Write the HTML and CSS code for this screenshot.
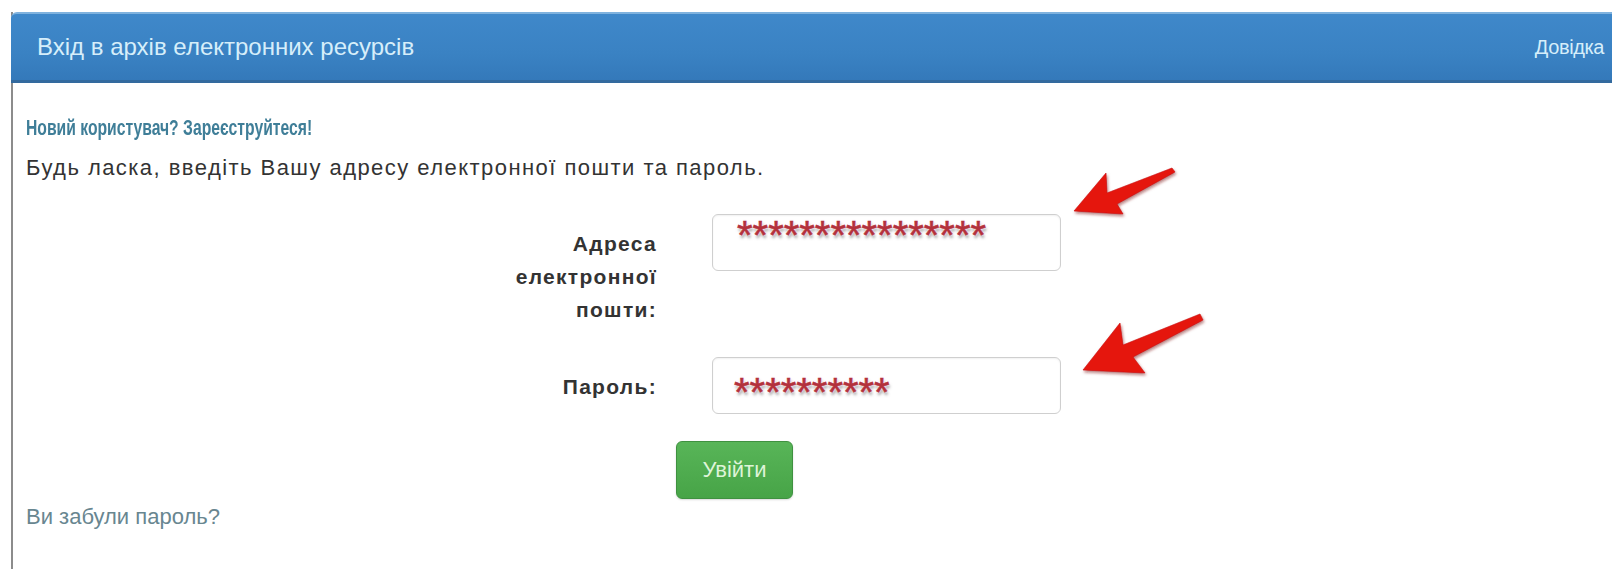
FILE: index.html
```html
<!DOCTYPE html>
<html lang="uk">
<head>
<meta charset="utf-8">
<title>Вхід в архів електронних ресурсів</title>
<link rel="stylesheet" href="styles.css">
</head>
<body>
<div class="panel">
  <div class="panel-heading">
    <span class="panel-title">Вхід в архів електронних ресурсів</span>
    <a class="help-link" href="#">Довідка</a>
  </div>
  <div class="panel-body">
    <div class="register-line"><a class="register-link" href="#">Новий користувач? Зареєструйтеся!</a></div>
    <p class="intro">Будь ласка, введіть Вашу адресу електронної пошти та пароль.</p>
    <form class="login-form">
      <div class="form-row">
        <label class="form-label">Адреса електронної пошти:</label>
        <div class="field field-email"><span class="mask">****************</span></div>
      </div>
      <div class="form-row">
        <label class="form-label">Пароль:</label>
        <div class="field field-password"><span class="mask">**********</span></div>
      </div>
      <div class="form-actions">
        <button type="button" class="btn-submit">Увійти</button>
      </div>
    </form>
    <a class="forgot-link" href="#">Ви забули пароль?</a>
  </div>
</div>

<svg class="callouts" width="1612" height="569" viewBox="0 0 1612 569" xmlns="http://www.w3.org/2000/svg">
  <defs>
    <filter id="arrow-shadow" x="-20%" y="-20%" width="140%" height="160%">
      <feDropShadow dx="1" dy="2" stdDeviation="1.4" flood-color="#7a1010" flood-opacity="0.55"/>
    </filter>
  </defs>
  <g class="arrow" filter="url(#arrow-shadow)">
    <polygon points="1074,211 1106,173 1107,193 1172,168 1175,172 1117,204 1123,214"/>
    <polygon points="1083,370 1120,323 1123,345 1200,314 1203,320 1133,357 1145,373"/>
  </g>
</svg>
</body>
</html>
```

FILE: styles.css
```css
* {
  box-sizing: border-box;
}

html, body {
  margin: 0;
  background: #fff;
  overflow: hidden;
}

body {
  font-family: "Liberation Sans", Arial, sans-serif;
  font-size: 21px;
  line-height: 30px;
  color: #333;
}

a {
  text-decoration: none;
}

/* panel frame: runs past the right and bottom edges of the window */
.panel {
  height: 600px;
  margin: 12px -30px 0 11px;
  border-left: 2px solid #8c8c8c;
  border-right: 2px solid #8c8c8c;
}

.panel-heading {
  height: 71px;
  margin-left: -2px;
  padding: 0 36px 0 26px;
  display: flex;
  align-items: center;
  justify-content: space-between;
  background: linear-gradient(#3f88ca, #3a82c3 60%, #3479ba);
  border-top: 2px solid #7fb2de;
  border-bottom: 3px solid #336a9e;
  border-radius: 6px 6px 0 0;
}

.panel-title {
  font-size: 24px;
  color: #d6eefa;
}

.help-link {
  font-size: 20px;
  letter-spacing: -0.4px;
  color: #d6eefa;
}

.panel-body {
  padding: 30px 13px 0 13px;
}

.register-line {
  height: 30px;
}

/* condensed bold link */
.register-link {
  display: inline-block;
  font-size: 21.5px;
  font-weight: bold;
  white-space: nowrap;
  color: #3f7e98;
  transform: scaleX(0.73);
  transform-origin: left center;
}

.intro {
  margin: 10px 0 0;
  font-size: 22px;
  letter-spacing: 1.45px;
}

/* horizontal form: labels right-aligned, fields in the second column */
.login-form {
  margin: 31px 0 0 471px;
}

.form-row {
  display: grid;
  grid-template-columns: 160px 349px;
  column-gap: 55px;
  align-items: start;
  margin-bottom: 31px;
}

.form-row:nth-child(2) {
  margin-bottom: 27px;
}

.form-label {
  padding-top: 13px;
  font-weight: bold;
  line-height: 33px;
  letter-spacing: 1.3px;
  text-align: right;
}

.field {
  height: 57px;
  border: 1px solid #cfcfcf;
  border-radius: 6px;
  box-shadow: inset 0 1px 2px rgba(0, 0, 0, 0.06);
  overflow: hidden;
}

.field-email {
  padding: 0 0 0 24px;
}

.field-password {
  padding: 14px 0 0 21px;
}

.mask {
  display: block;
  font-size: 40px;
  line-height: 40px;
  color: #b3313c;
  -webkit-text-stroke: 0.6px #b3313c;
  text-shadow: 0 0 1px #fff, 0 0 2px #fff, 0 0 3px #fde, 1px 3px 3px rgba(70, 70, 70, 0.55);
}

.form-actions {
  padding-left: 179px;
}

.btn-submit {
  width: 117px;
  height: 58px;
  padding: 0;
  font-family: "Liberation Sans", Arial, sans-serif;
  font-size: 22px;
  color: #def4d8;
  background: linear-gradient(#58b558, #47a447);
  border: 1px solid #3f9140;
  border-radius: 6px;
  box-shadow: 0 1px 2px rgba(0, 0, 0, 0.15);
}

.forgot-link {
  display: block;
  margin-top: 3px;
  font-size: 22px;
  color: #688690;
}

/* annotation arrows drawn over the form */
.callouts {
  position: absolute;
  top: 0;
  left: 0;
  pointer-events: none;
}

.arrow polygon {
  fill: #e5140e;
  stroke: #c90f0c;
  stroke-width: 0.6;
  stroke-linejoin: round;
}
```
